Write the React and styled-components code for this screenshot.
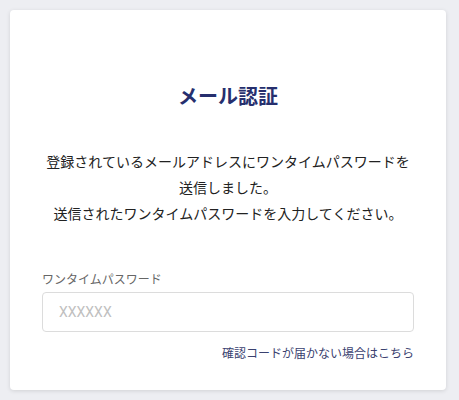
import React from "react";
import styled, { createGlobalStyle } from "styled-components";

const Global = createGlobalStyle`
  html, body { margin: 0; padding: 0; background: #edeef2; }
  body { font-family: "Noto Sans CJK JP", "Noto Sans", sans-serif; }
  * { box-sizing: border-box; }
`;

const Page = styled.div`
  padding: 10px 13px 10px 10px;
`;

const Card = styled.div`
  background: #fff;
  border-radius: 4px;
  box-shadow: 0 1px 4px rgba(0, 0, 0, 0.12);
  height: 380px;
  padding: 71px 32px 0;
  display: flex;
  flex-direction: column;
`;

const Title = styled.h1`
  margin: 0;
  font-size: 20px;
  line-height: 30px;
  font-weight: 700;
  color: #262f6e;
  text-align: center;
`;

const Message = styled.p`
  margin: 37px 0 0;
  font-size: 14px;
  line-height: 26px;
  color: #222;
  text-align: center;
`;

const Field = styled.div`
  margin-top: 44px;
  display: flex;
  flex-direction: column;
`;

const Label = styled.label`
  font-size: 12px;
  line-height: 18px;
  color: #666;
  margin-bottom: 4px;
`;

const Input = styled.input`
  height: 40px;
  border: 1px solid #dcdcdc;
  border-radius: 4px;
  padding: 0 16px;
  font-family: Roboto, "Noto Sans", sans-serif;
  font-size: 14px;
  color: #333;
  outline: none;
  &::placeholder { color: #c0c0c0; }
`;

const LinkRow = styled.div`
  margin-top: 12px;
  display: flex;
  justify-content: flex-end;
`;

const Link = styled.a`
  font-size: 12px;
  line-height: 18px;
  color: #3a416f;
  text-decoration: none;
`;

export default function App() {
  return (
    <>
      <Global />
      <Page>
        <Card>
          <Title>メール認証</Title>
          <Message>
            登録されているメールアドレスにワンタイムパスワードを
            <br />
            送信しました。
            <br />
            送信されたワンタイムパスワードを入力してください。
          </Message>
          <Field>
            <Label>ワンタイムパスワード</Label>
            <Input placeholder="XXXXXX" />
          </Field>
          <LinkRow>
            <Link href="#">確認コードが届かない場合はこちら</Link>
          </LinkRow>
        </Card>
      </Page>
    </>
  );
}
